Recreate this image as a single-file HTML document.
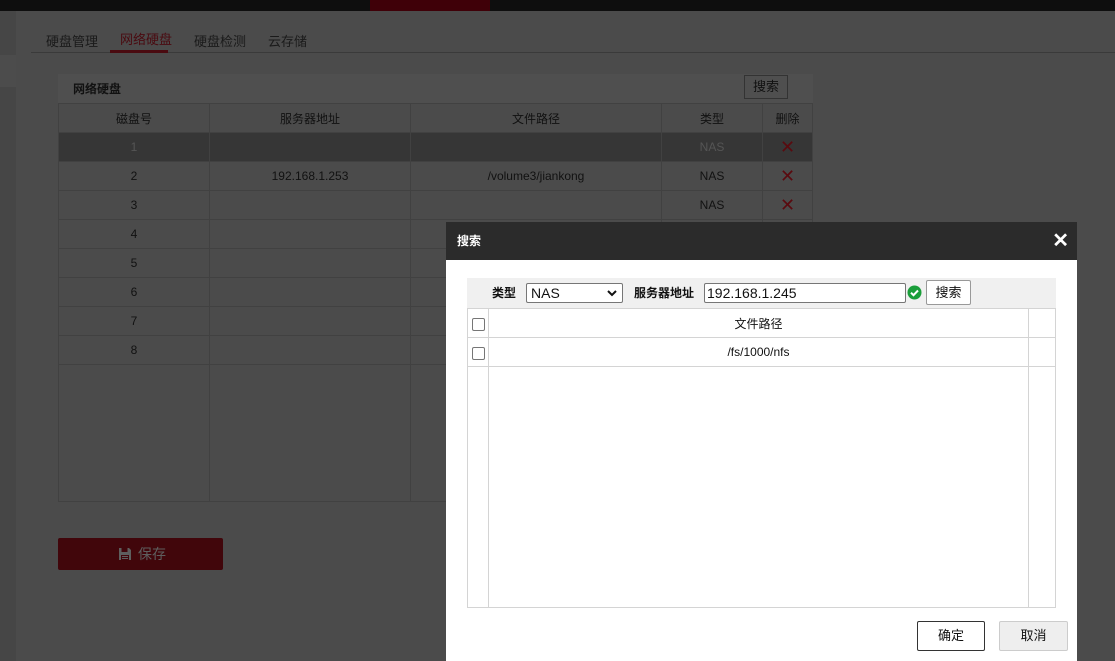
<!DOCTYPE html>
<html><head><meta charset="utf-8"><style>
*{box-sizing:border-box;margin:0;padding:0}
body{width:1115px;height:661px;overflow:hidden;background:#4b4b4b;font-family:"Liberation Sans","Noto Sans CJK SC",sans-serif;font-size:12px;color:#111;position:relative}
.abs{position:absolute}
table{border-collapse:collapse}
.mt td{border:1px solid #414141;height:29px;text-align:center;color:#111}
.mt td.x{color:#5a0a0f;font-size:18px}
</style></head><body>
<div class="abs" style="left:0;top:0;width:1115px;height:11px;background:#0e0e0e"></div>
<div class="abs" style="left:370px;top:0;width:120px;height:11px;background:#3f0008"></div>
<div class="abs" style="left:0;top:11px;width:16px;height:650px;background:#464646"></div>
<div class="abs" style="left:0;top:55px;width:16px;height:32px;background:#4c4c4c"></div>
<div class="abs" style="left:31px;top:52px;width:1084px;height:1px;background:#3a3a3a"></div>
<div class="abs" style="left:46px;top:31px;font-size:13px;color:#1a1a1a">硬盘管理</div>
<div class="abs" style="left:120px;top:29px;font-size:13px;color:#4a0a10">网络硬盘</div>
<div class="abs" style="left:110px;top:50px;width:58px;height:3px;background:#4a0a10"></div>
<div class="abs" style="left:194px;top:31px;font-size:13px;color:#1a1a1a">硬盘检测</div>
<div class="abs" style="left:268px;top:31px;font-size:13px;color:#1a1a1a">云存储</div>
<div class="abs" style="left:58px;top:74px;width:755px;height:29px;background:#4f4f4f"></div>
<div class="abs" style="left:73px;top:80px;font-weight:bold;color:#111">网络硬盘</div>
<div class="abs" style="left:744px;top:75px;width:44px;height:24px;border:1px solid #333;text-align:center;line-height:22px;font-size:13px">搜索</div>
<table class="mt abs" style="left:58px;top:103px;width:755px">
<tr><td style="width:151px">磁盘号</td><td style="width:201px">服务器地址</td><td style="width:251px">文件路径</td><td style="width:101px">类型</td><td>删除</td></tr>
<tr style="background:#363636"><td style="color:#555">1</td><td></td><td></td><td style="color:#555">NAS</td><td class="x">✕</td></tr>
<tr><td>2</td><td>192.168.1.253</td><td>/volume3/jiankong</td><td>NAS</td><td class="x">✕</td></tr>
<tr><td>3</td><td></td><td></td><td>NAS</td><td class="x">✕</td></tr>
<tr><td>4</td><td></td><td></td><td></td><td></td></tr>
<tr><td>5</td><td></td><td></td><td></td><td></td></tr>
<tr><td>6</td><td></td><td></td><td></td><td></td></tr>
<tr><td>7</td><td></td><td></td><td></td><td></td></tr>
<tr><td>8</td><td></td><td></td><td></td><td></td></tr>
<tr><td style="height:137px"></td><td></td><td></td><td></td><td></td></tr>
</table>
<div class="abs" style="left:58px;top:538px;width:165px;height:32px;background:#41060b;border-radius:2px;color:#5e5e5e;font-size:14px;line-height:32px;padding-left:60px">
<svg width="14" height="14" viewBox="0 0 14 14" style="vertical-align:-2px;margin-right:6px"><path d="M1 1h10l2 2v10H1z" fill="#5e5e5e"/><rect x="3.5" y="1" width="6" height="4" fill="#41060b"/><rect x="3" y="8" width="8" height="5" fill="#41060b"/><rect x="4" y="9" width="6" height="1" fill="#5e5e5e"/><rect x="4" y="11" width="6" height="1" fill="#5e5e5e"/></svg>保存</div>
<!-- dialog -->
<div class="abs" style="left:446px;top:222px;width:631px;height:439px;background:#fff">
<div style="height:38px;background:#2b2b2b;color:#fff;font-weight:bold;line-height:38px;padding-left:11px">搜索<span style="position:absolute;right:8px;top:0;font-size:20px">✕</span></div>
<div class="abs" style="left:21px;top:56px;width:589px;height:30px;background:#f0f0f0"></div>
<div class="abs" style="left:46px;top:62px;font-weight:bold">类型</div>
<div class="abs" style="left:80px;top:61px;width:97px;height:20px;border:1px solid #767676;border-radius:2px;font-size:14px;line-height:18px;padding-left:4px;background:#fff">NAS<svg class="abs" style="right:5px;top:6px" width="10" height="7" viewBox="0 0 10 7"><path d="M1 1l4 4 4-4" stroke="#111" stroke-width="2" fill="none"/></svg></div>
<div class="abs" style="left:188px;top:62px;font-weight:bold">服务器地址</div>
<div class="abs" style="left:258px;top:61px;width:202px;height:20px;border:1px solid #767676;border-radius:2px;font-size:14px;line-height:18px;padding-left:2px;background:#fff">192.168.1.245</div>
<svg class="abs" style="left:461px;top:63px" width="15" height="15" viewBox="0 0 15 15"><circle cx="7.5" cy="7.5" r="7" fill="#1a9e3a"/><path d="M4 7.7l2.5 2.5 4.5-4.7" stroke="#fff" stroke-width="2" fill="none"/></svg>
<div class="abs" style="left:480px;top:58px;width:45px;height:25px;border:1px solid #999;border-radius:2px;text-align:center;line-height:23px;font-size:13px;background:#fff">搜索</div>
<div class="abs" style="left:21px;top:86px;width:589px;height:300px;border:1px solid #d4d4d4"></div>
<div class="abs" style="left:42px;top:86px;width:1px;height:300px;background:#d4d4d4"></div>
<div class="abs" style="left:582px;top:86px;width:1px;height:300px;background:#d4d4d4"></div>
<div class="abs" style="left:21px;top:115px;width:589px;height:1px;background:#d4d4d4"></div>
<div class="abs" style="left:21px;top:144px;width:589px;height:1px;background:#d4d4d4"></div>
<div class="abs" style="left:26px;top:96px;width:13px;height:13px;border:1px solid #767676;border-radius:2px"></div>
<div class="abs" style="left:26px;top:125px;width:13px;height:13px;border:1px solid #767676;border-radius:2px"></div>
<div class="abs" style="left:43px;top:93px;width:539px;text-align:center">文件路径</div>
<div class="abs" style="left:43px;top:123px;width:539px;text-align:center">/fs/1000/nfs</div>
<div class="abs" style="left:471px;top:399px;width:68px;height:30px;border:1px solid #333;border-radius:2px;text-align:center;line-height:28px;font-size:13px">确定</div>
<div class="abs" style="left:553px;top:399px;width:69px;height:30px;border:1px solid #ccc;border-radius:2px;background:#eee;text-align:center;line-height:28px;font-size:13px">取消</div>
</div>
</body></html>
